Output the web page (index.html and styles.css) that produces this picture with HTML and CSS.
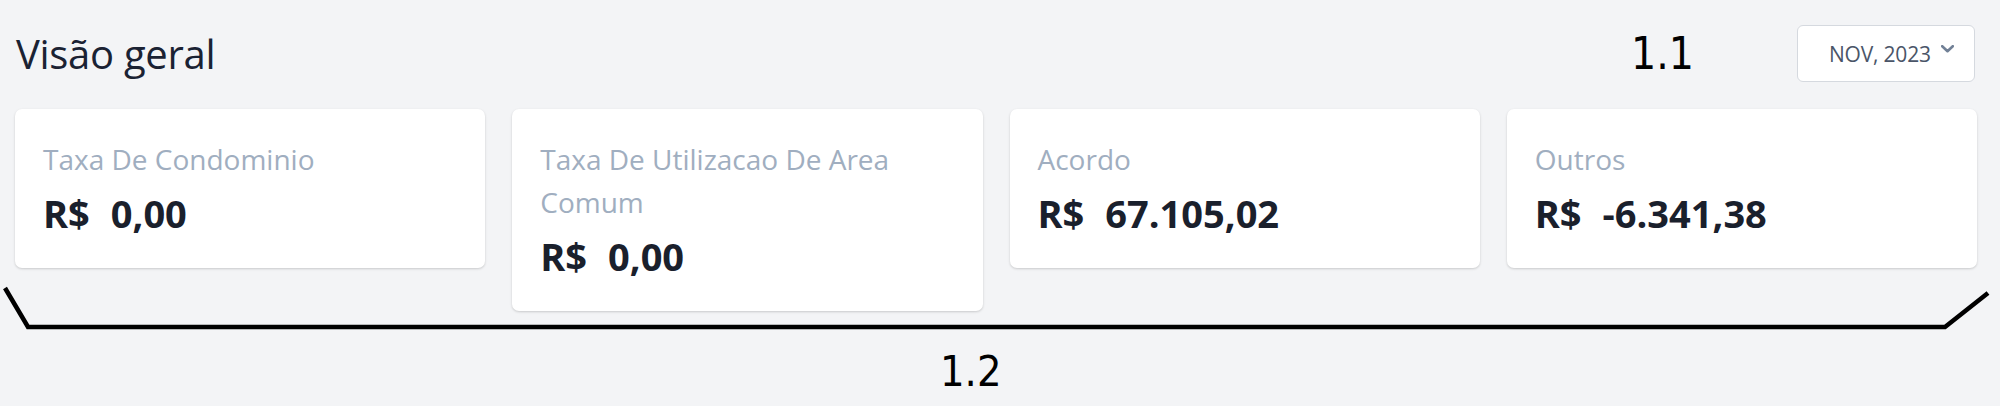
FILE: index.html
```html
<!DOCTYPE html>
<html lang="pt-BR">
<head>
<meta charset="utf-8">
<title>Visão geral</title>
<link rel="stylesheet" href="styles.css">
</head>
<body>
<div class="page">
  <header class="header">
    <h1 class="title">Visão geral</h1>
    <button class="month" type="button">
      <span class="month-text">NOV, 2023</span>
      <svg class="chev" width="13" height="8" viewBox="0 0 13 8"><path d="M1.2 1.2 L6.5 6.2 L11.8 1.2" fill="none" stroke="#718096" stroke-width="2.6" stroke-linecap="round" stroke-linejoin="round"/></svg>
    </button>
  </header>
  <section class="cards">
    <div class="card">
      <div class="label">Taxa De Condominio</div>
      <div class="value"><span class="cur">R$</span><span class="amt">0,00</span></div>
    </div>
    <div class="card">
      <div class="label">Taxa De Utilizacao De Area Comum</div>
      <div class="value"><span class="cur">R$</span><span class="amt">0,00</span></div>
    </div>
    <div class="card">
      <div class="label">Acordo</div>
      <div class="value"><span class="cur">R$</span><span class="amt">67.105,02</span></div>
    </div>
    <div class="card">
      <div class="label">Outros</div>
      <div class="value"><span class="cur">R$</span><span class="amt">-6.341,38</span></div>
    </div>
  </section>
  <div class="note note-1">1.1</div>
  <div class="note note-2">1.2</div>
  <svg class="bracket" width="2000" height="406" viewBox="0 0 2000 406">
    <polyline points="5,288 28,327 1945,327 1988,293" fill="none" stroke="#000" stroke-width="4.5" stroke-linejoin="miter"/>
  </svg>
</div>
</body>
</html>
```

FILE: styles.css
```css
* { box-sizing: border-box; }
html, body { margin: 0; padding: 0; }
body {
  background: #f3f4f6;
  font-family: "Open Sans", "Noto Sans", sans-serif;
  width: 2000px;
  height: 406px;
  overflow: hidden;
}
.page {
  position: relative;
  width: 2000px;
  height: 406px;
  padding: 25px 23px 0 15px;
}
.header {
  display: flex;
  align-items: center;
  justify-content: space-between;
  height: 57px;
}
.title {
  margin: 0 0 0 1px;
  font-size: 40px;
  font-weight: 500;
  color: #1a2233;
  line-height: 57px;
  letter-spacing: -0.3px;
}
.month {
  display: flex;
  align-items: center;
  width: 178px;
  height: 57px;
  margin-right: 2px;
  padding: 0 20px 0 31px;
  background: #fff;
  border: 1px solid #d5d9df;
  border-radius: 6px;
  font-family: inherit;
  cursor: pointer;
}
.month-text {
  font-size: 21px;
  color: #4a5568;
  letter-spacing: -0.2px;
}
.chev { margin-left: auto; margin-top: -10px; }
.cards {
  display: grid;
  grid-template-columns: repeat(4, 1fr);
  gap: 27px;
  align-items: start;
  margin-top: 27px;
}
.card {
  background: #fff;
  border-radius: 7px;
  box-shadow: 0 1px 3px rgba(0,0,0,0.12), 0 1px 2px rgba(0,0,0,0.06);
  padding: 29px 28px 31px 28px;
}
.label {
  font-size: 28px;
  line-height: 43px;
  color: #a0aec0;
}
.value {
  margin-top: 8px;
  font-size: 38px;
  line-height: 48px;
  font-weight: 700;
  color: #1a202c;
  white-space: nowrap;
}
.amt { margin-left: 21px; }
.note {
  position: absolute;
  font-family: "DejaVu Sans Condensed", "DejaVu Sans", sans-serif;
  font-stretch: condensed;
  color: #000;
  line-height: 1;
}
.note-1 { left: 1631px; top: 32px; font-size: 44px; }
.note-2 { left: 940px; top: 350px; font-size: 43px; }
.bracket { position: absolute; left: 0; top: 0; pointer-events: none; }
```
